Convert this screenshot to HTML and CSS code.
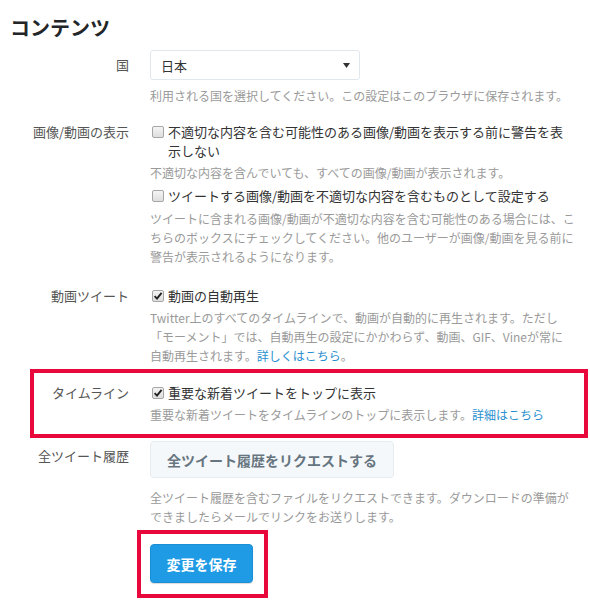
FILE: index.html
```html
<!DOCTYPE html>
<html lang="ja">
<head>
<meta charset="utf-8">
<title>コンテンツ</title>
<link rel="stylesheet" href="styles.css">
</head>
<body>
<main class="page">
  <h1 class="title">コンテンツ</h1>

  <section class="row row-country">
    <div class="label label-select">国</div>
    <div class="field">
      <div class="select">
        <span class="select-value">日本</span>
        <svg class="select-arrow" width="7" height="5" viewBox="0 0 7 5"><path d="M0 0H7L3.5 5Z" fill="#333"/></svg>
      </div>
      <p class="help help-country">利用される国を選択してください。この設定はこのブラウザに保存されます。</p>
    </div>
  </section>

  <section class="row row-media">
    <div class="label">画像/動画の表示</div>
    <div class="field">
      <div class="check">
        <span class="box"></span>
        <span class="check-text">不適切な内容を含む可能性のある画像/動画を表示する前に警告を表<br>示しない</span>
      </div>
      <p class="help help-tight">不適切な内容を含んでいても、すべての画像/動画が表示されます。</p>
      <div class="check check-second">
        <span class="box"></span>
        <span class="check-text">ツイートする画像/動画を不適切な内容を含むものとして設定する</span>
      </div>
      <p class="help help-second">ツイートに含まれる画像/動画が不適切な内容を含む可能性のある場合には、こ<br>ちらのボックスにチェックしてください。他のユーザーが画像/動画を見る前に<br>警告が表示されるようになります。</p>
    </div>
  </section>

  <section class="row row-video">
    <div class="label">動画ツイート</div>
    <div class="field">
      <div class="check">
        <span class="box checked"><svg width="10" height="10" viewBox="0 0 10 10"><path d="M1.6 5.2L4 7.6L8.6 1.8" fill="none" stroke="#222" stroke-width="1.9"/></svg></span>
        <span class="check-text">動画の自動再生</span>
      </div>
      <p class="help help-tight">Twitter上のすべてのタイムラインで、動画が自動的に再生されます。ただし<br>「モーメント」では、自動再生の設定にかかわらず、動画、GIF、Vineが常に<br>自動再生されます。<a class="link" href="#">詳しくはこちら</a>。</p>
    </div>
  </section>

  <section class="row row-timeline">
    <div class="label">タイムライン</div>
    <div class="field">
      <div class="check">
        <span class="box checked"><svg width="10" height="10" viewBox="0 0 10 10"><path d="M1.6 5.2L4 7.6L8.6 1.8" fill="none" stroke="#222" stroke-width="1.9"/></svg></span>
        <span class="check-text">重要な新着ツイートをトップに表示</span>
      </div>
      <p class="help help-tight">重要な新着ツイートをタイムラインのトップに表示します。<a class="link" href="#">詳細はこちら</a></p>
    </div>
  </section>

  <section class="row row-archive">
    <div class="label label-archive">全ツイート履歴</div>
    <div class="field">
      <button class="btn-request" type="button">全ツイート履歴をリクエストする</button>
      <p class="help help-archive">全ツイート履歴を含むファイルをリクエストできます。ダウンロードの準備が<br>できましたらメールでリンクをお送りします。</p>
    </div>
  </section>

  <div class="save-wrap">
    <div class="save-box">
      <button class="btn-save" type="button">変更を保存</button>
    </div>
  </div>
</main>
</body>
</html>
```

FILE: styles.css
```css
* { box-sizing: border-box; }

html, body {
  margin: 0;
  padding: 0;
  background: #ffffff;
}

body {
  font-family: "Noto Sans CJK JP", "Noto Sans", sans-serif;
  color: #333333;
  width: 590px;
  height: 600px;
  overflow: hidden;
}

.page {
  padding: 0;
}

.title {
  margin: 0;
  padding: 16px 0 0 10px;
  font-size: 20px;
  line-height: 24px;
  font-weight: 700;
  color: #222629;
}

.row {
  display: grid;
  grid-template-columns: 130px 430px;
  column-gap: 20px;
}

.label {
  text-align: right;
  font-size: 13px;
  line-height: 19px;
  color: #555555;
  padding-right: 1px;
}

.label-select {
  line-height: 30px;
}

.label-archive {
  padding-top: 5px;
}

.field {
  min-width: 0;
}

.row-country { margin-top: 10px; }
.row-media { margin-top: 17px; }
.row-video { margin-top: 20px; }
.row-archive { margin-top: 3px; }

.row-timeline {
  margin: 4px 0 0 30px;
  width: 558px;
  border: 4px solid #e8083c;
  padding: 10px 0 10px 0;
  grid-template-columns: 96px 400px;
}

.select {
  width: 210px;
  height: 30px;
  border: 1px solid #e1e8ed;
  border-radius: 3px;
  background: #ffffff;
  display: flex;
  align-items: center;
  justify-content: space-between;
  padding: 0 9px 0 10px;
}

.select-value {
  font-size: 13px;
  line-height: 19px;
  color: #333333;
}

.help {
  margin: 3px 0 0 0;
  font-size: 12px;
  line-height: 19px;
  color: #9a9a9a;
}

.help-country { margin-top: 6px; }
.help-tight { margin-top: 3px; }
.help-second { margin-top: 4px; }
.help-archive { margin-top: 10px; }

.link {
  color: #2a8fcf;
  text-decoration: none;
}

.check {
  display: flex;
  align-items: flex-start;
}

.check-second { margin-top: 4px; }

.box {
  flex: none;
  width: 12px;
  height: 12px;
  margin: 4px 4px 0 2px;
  border: 1px solid #a6a6a6;
  border-radius: 2px;
  background: linear-gradient(#f4f4f4, #dedede);
  display: flex;
  align-items: center;
  justify-content: center;
}

.check-text {
  font-size: 13px;
  line-height: 19px;
  color: #333333;
}

.btn-request {
  display: block;
  height: 37px;
  padding: 0 16px;
  border: 1px solid #e6ecf0;
  border-radius: 4px;
  background: #f5f8fa;
  font-family: "Noto Sans CJK JP", "Noto Sans", sans-serif;
  font-size: 14px;
  font-weight: 700;
  color: #66757f;
  line-height: 20px;
}

.save-wrap {
  margin-top: 4px;
  padding-left: 137px;
}

.save-box {
  width: 131px;
  border: 4px solid #e8083c;
  padding: 10px 11px 11px 9px;
}

.btn-save {
  display: block;
  width: 103px;
  height: 39px;
  padding: 0;
  border: 1px solid #1b8fd6;
  border-radius: 4px;
  background: #1f9be6;
  font-family: "Noto Sans CJK JP", "Noto Sans", sans-serif;
  font-size: 14px;
  font-weight: 700;
  color: #ffffff;
  box-shadow: 0 1px 1px rgba(0, 0, 0, 0.15);
}
```
